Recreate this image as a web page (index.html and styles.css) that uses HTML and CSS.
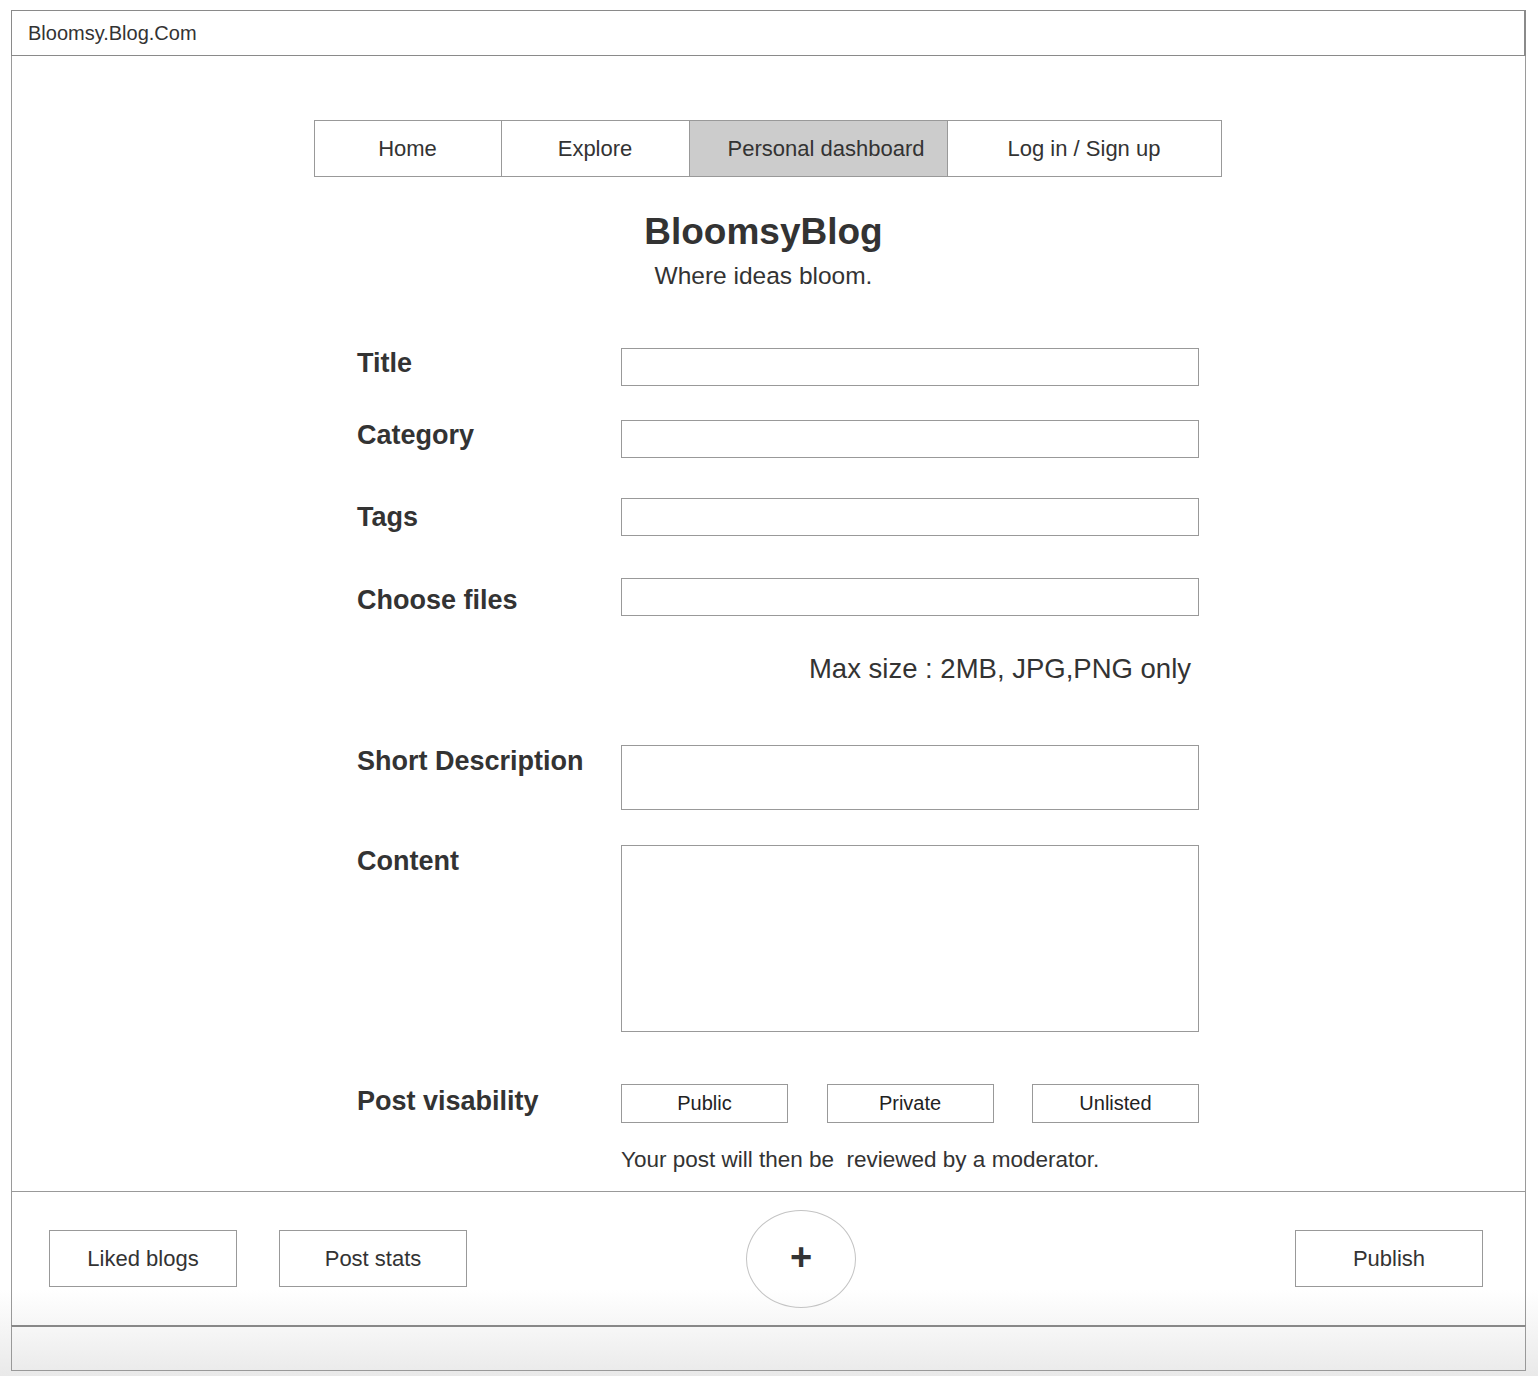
FILE: index.html
```html
<!DOCTYPE html>
<html lang="en">
<head>
<meta charset="utf-8">
<title>BloomsyBlog – New post</title>
<link rel="stylesheet" href="styles.css">
</head>
<body>
<div class="frame">
  <div class="addressbar">Bloomsy.Blog.Com</div>
  <main class="main">
    <nav class="nav">
      <a class="nav-item nav-home">Home</a>
      <a class="nav-item nav-explore">Explore</a>
      <a class="nav-item nav-dash active">Personal dashboard</a>
      <a class="nav-item nav-login">Log in / Sign up</a>
    </nav>
    <header class="brand">
      <h1 class="brand-title">BloomsyBlog</h1>
      <p class="brand-sub">Where ideas bloom.</p>
    </header>
    <form class="post-form">
      <div class="row row-title">
        <label class="label">Title</label>
        <div class="field"></div>
      </div>
      <div class="row row-category">
        <label class="label">Category</label>
        <div class="field"></div>
      </div>
      <div class="row row-tags">
        <label class="label">Tags</label>
        <div class="field"></div>
      </div>
      <div class="row row-files">
        <label class="label">Choose files</label>
        <div class="field"></div>
      </div>
      <p class="hint-size">Max size : 2MB, JPG,PNG only</p>
      <div class="row row-top row-short">
        <label class="label">Short Description</label>
        <div class="field field-short"></div>
      </div>
      <div class="row row-top row-content">
        <label class="label">Content</label>
        <div class="field field-content"></div>
      </div>
      <div class="row row-visibility">
        <label class="label">Post visability</label>
        <div class="vis-options">
          <span class="vis-btn">Public</span>
          <span class="vis-btn">Private</span>
          <span class="vis-btn">Unlisted</span>
        </div>
      </div>
      <p class="hint-review">Your post will then be&nbsp; reviewed by a moderator.</p>
    </form>
  </main>
  <footer class="bottombar">
    <span class="btn">Liked blogs</span>
    <span class="btn btn-stats">Post stats</span>
    <span class="fab">+</span>
    <span class="btn btn-publish">Publish</span>
  </footer>
  <div class="statusbar"></div>
</div>
</body>
</html>
```

FILE: styles.css
```css
html, body {
  margin: 0;
  padding: 0;
}

body {
  width: 1538px;
  min-height: 1376px;
  font-family: "Liberation Sans", Arial, Helvetica, sans-serif;
  color: #333333;
  background: linear-gradient(to bottom, #ffffff 0, #ffffff 1290px, #e9e9e9 1376px);
}

.frame {
  margin: 10px 0 0 11px;
  width: 1515px;
}

.addressbar {
  box-sizing: border-box;
  height: 46px;
  border: 1px solid #8a8a8a;
  border-right-width: 2px;
  padding-left: 16px;
  display: flex;
  align-items: center;
  font-size: 20px;
  color: #333;
  background: #fff;
}

.main {
  box-sizing: border-box;
  height: 1135px;
  border-left: 1px solid #9a9a9a;
  border-right: 1px solid #9a9a9a;
  padding-top: 64px;
}

/* Navigation */
.nav {
  display: flex;
  justify-content: center;
  padding-right: 2px;
}

.nav-item {
  box-sizing: border-box;
  height: 57px;
  display: flex;
  align-items: center;
  justify-content: center;
  border: 1px solid #999;
  border-left: none;
  font-size: 22px;
  color: #333;
  background: #fff;
}

.nav-home { width: 188px; border-left: 1px solid #999; }
.nav-explore { width: 188px; }
.nav-dash { width: 258px; padding-left: 16px; }
.nav-login { width: 274px; }

.nav-item.active {
  background: #cccccc;
}

/* Brand */
.brand {
  text-align: center;
  margin-top: 34px;
  padding-right: 10px;
}

.brand-title {
  margin: 0;
  font-size: 37px;
  line-height: 42px;
  font-weight: bold;
  color: #333;
}

.brand-sub {
  margin: 9px 0 0;
  font-size: 24.5px;
  line-height: 28px;
}

/* Form */
.post-form {
  margin: 58px 0 0 345px;
  width: 842px;
}

.row {
  display: flex;
  align-items: center;
}

.row-top {
  align-items: flex-start;
}

.label {
  width: 264px;
  flex: none;
  font-size: 27px;
  line-height: 32px;
  font-weight: bold;
  color: #333;
}

.row-title .label,
.row-category .label {
  margin-top: -8px;
}

.row-files .label {
  margin-top: 6px;
}

.field {
  box-sizing: border-box;
  width: 578px;
  height: 38px;
  border: 1px solid #999;
  background: #fff;
}

.row-category { margin-top: 34px; }
.row-tags { margin-top: 40px; }
.row-files { margin-top: 42px; }

.hint-size {
  margin: 38px 0 0;
  font-size: 27.5px;
  line-height: 30px;
  text-align: right;
  padding-right: 8px;
}

.row-short { margin-top: 61px; }
.field-short { height: 65px; }

.row-content { margin-top: 35px; }
.field-content { height: 187px; }

.row-visibility { margin-top: 52px; }
.row-visibility .label { margin-top: -6px; }

.vis-options {
  width: 578px;
  display: flex;
  justify-content: space-between;
}

.vis-btn {
  box-sizing: border-box;
  width: 167px;
  height: 39px;
  border: 1px solid #999;
  display: flex;
  align-items: center;
  justify-content: center;
  font-size: 20px;
  color: #222;
  background: #fff;
}

.hint-review {
  margin: 24px 0 0 264px;
  font-size: 22.5px;
  line-height: 26px;
}

/* Bottom bar */
.bottombar {
  box-sizing: border-box;
  height: 134px;
  border-top: 1px solid #999;
  border-left: 1px solid #999;
  border-right: 1px solid #999;
  padding: 0 42px 0 37px;
  display: flex;
  align-items: center;
}

.btn {
  box-sizing: border-box;
  width: 188px;
  height: 57px;
  border: 1px solid #999;
  display: flex;
  align-items: center;
  justify-content: center;
  font-size: 22px;
  color: #333;
  background: #fff;
  flex: none;
}

.btn-stats { margin-left: 42px; }

.fab {
  box-sizing: border-box;
  width: 110px;
  height: 98px;
  margin-left: 279px;
  border: 1px solid #c4c4c4;
  border-radius: 50%;
  display: flex;
  align-items: center;
  justify-content: center;
  font-size: 38px;
  font-weight: bold;
  line-height: 1;
  color: #333;
  padding-bottom: 4px;
}

.btn-publish { margin-left: auto; }

.statusbar {
  box-sizing: border-box;
  height: 46px;
  border-top: 2px solid #888;
  border-left: 1px solid #999;
  border-right: 1px solid #999;
  border-bottom: 1px solid #999;
  background: linear-gradient(to bottom, #f7f7f7, #ebebeb);
}
```
